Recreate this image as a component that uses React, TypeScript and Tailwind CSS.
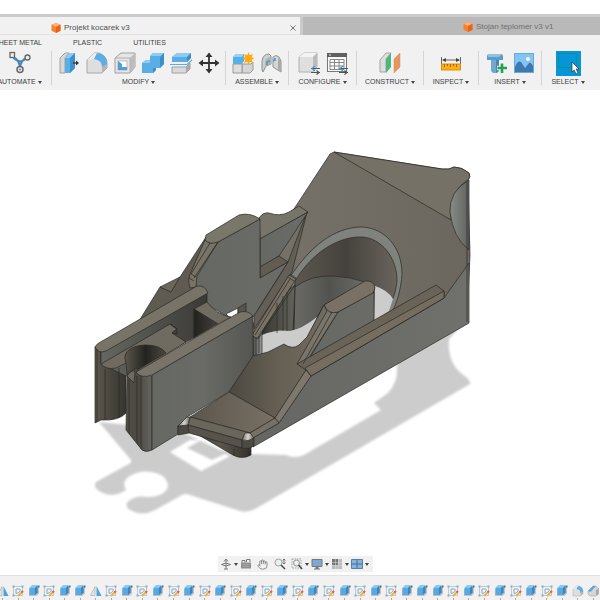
import React from 'react';
import { Hand } from 'lucide-react';

type IconProps = { className?: string };

const Svg: React.FC<{ children: React.ReactNode; className?: string }> = ({ children, className }) => (
    <svg viewBox="0 0 24 24" fill="none" aria-hidden="true" className={className || 'w-6 h-6'}>{children}</svg>
);

const CubeIcon = () => (
    <svg viewBox="0 0 10 10" aria-hidden="true" className="w-[10px] h-[10px]">
        <path d="M5 0L9.5 1.8V7.8L5 10L.5 7.8V1.8Z" fill="#f58232" />
        <path d="M5 0L9.5 1.8L5 4L.5 1.8Z" fill="#ffb47a" />
        <path d="M5 4L9.5 1.8V7.8L5 10Z" fill="#ef6210" />
    </svg>
);

const AutomateIcon = () => (
    <Svg>
        <path d="M5 6Q12 9 12 18Q12 9 19 7M5 6Q11 14 19 7" stroke="#4b86b8" strokeWidth="2" />
        <rect x="2" y="1.500" width="4.500" height="5" fill="#eee" stroke="#666" strokeWidth="1.300" />
        <circle cx="19.500" cy="6.500" r="2.500" fill="#eee" stroke="#666" strokeWidth="1.300" />
        <circle cx="12" cy="18.500" r="3" fill="#eee" stroke="#666" strokeWidth="1.500" />
        <circle cx="12" cy="18.500" r="1" fill="#4b86b8" />
    </Svg>
);

const PressPullIcon = () => (
    <Svg>
        <path d="M3 7L8 2H12L8 7V22H3Z" fill="#d8d8d8" stroke="#a0a0a0" />
        <path d="M8 7L13 2H18V17L13 22H8Z" fill="#5aaee6" />
        <path d="M8 7L13 2H18L13 7Z" fill="#8ccaf2" />
        <path d="M13 7L18 2V17L13 22Z" fill="#3c91cd" />
        <path d="M16 12H21" stroke="#333" strokeWidth="1.300" />
        <path d="M19 9.500L22 12L19 14.500Z" fill="#333" />
    </Svg>
);

const FilletIcon = ({ className }: IconProps) => (
    <Svg className={className}>
        <path d="M2 9L9 2H14Q22 5 22 12V17L17 22H2Z" fill="#dedede" stroke="#a8a8a8" />
        <path d="M2 9L9 2H14L9 8Z" fill="#ececec" />
        <path d="M17 22V14L22 12V17Z" fill="#b5b5b5" />
        <path d="M9 8L12 2Q22 3 22 13L17 16Q17 9 9 8Z" fill="#5aaee6" />
    </Svg>
);

const ShellIcon = () => (
    <Svg>
        <path d="M2 7L8 2H22V16L17 22H2Z" fill="#e5e5e5" stroke="#a0a0a0" />
        <path d="M17 7L22 2V16L17 22Z" fill="#bdbdbd" />
        <path d="M2 7H17V22" stroke="#b0b0b0" />
        <rect x="5" y="10" width="9" height="9" fill="#fff" stroke="#999" strokeWidth=".600" />
        <path d="M5 10L9 13V16H14V19H5Z" fill="#4f9fd8" />
    </Svg>
);

const CombineIcon = () => (
    <Svg>
        <path d="M1 12L5 9H9V5L12 2H23V13L19 17H15V19L12 22H1Z" fill="#5aaee6" />
        <path d="M9 5L12 2H23L20 5ZM1 12L5 9H9V12Z" fill="#8ecbf3" />
        <path d="M20 5L23 2V13L19 17V6ZM12 17H15V19L12 22Z" fill="#3e8fc9" />
    </Svg>
);

const SplitIcon = () => (
    <Svg>
        <path d="M3 6L8 2H22V7L18 11H3Z" fill="#5aaee6" />
        <path d="M3 6L8 2H22L18 6Z" fill="#8ecbf3" />
        <path d="M18 6L22 2V7L18 11Z" fill="#3e8fc9" />
        <path d="M1 13.500H18L23 9" stroke="#5aaee6" strokeWidth="1.200" />
        <path d="M3 16H17L21 12V18L17 22H3Z" fill="#d9d9d9" stroke="#a0a0a0" />
        <path d="M17 16L21 12V18L17 22Z" fill="#aaa" />
    </Svg>
);

const MoveIcon = () => (
    <Svg>
        <path d="M12 4V20M4 12H20" stroke="#333" strokeWidth="1.800" />
        <path d="M12 1.500L15.500 6H8.500ZM12 22.500L15.500 18H8.500ZM1.500 12L6 8.500V15.500ZM22.500 12L18 8.500V15.500Z" fill="#333" />
    </Svg>
);

const NewComponentIcon = () => (
    <Svg>
        <path d="M11 13H20L22 11V19L19 22H11Z" fill="#d5d5d5" stroke="#9a9a9a" />
        <path d="M2 13H11V22H2Z" fill="#dedede" stroke="#9a9a9a" />
        <path d="M2 6L5 3H13V10L11 13H2Z" fill="#5aaee6" />
        <path d="M2 6L5 3H13L11 6Z" fill="#9bd0f3" />
        <path d="M17.500 1L18.800 4.200L22 3L20.800 6L23 7.500L20.800 9L22 12L18.800 10.800L17.500 14L16.200 10.800L13 12L14.200 9L12 7.500L14.200 6L13 3L16.200 4.200Z" fill="#ffa914" />
    </Svg>
);

const JointIcon = () => (
    <Svg>
        <path d="M3 10Q4 3 10 3L12 5V13L7 15L4 21L3 19Z" fill="#cfcfcf" stroke="#8f8f8f" />
        <path d="M6 11Q7 6 12 6V13L8 14L6 18Z" fill="#b3b3b3" />
        <path d="M14 6Q17 3 20 6L22 10V21L14 16Z" fill="#d6d6d6" stroke="#8f8f8f" />
        <path d="M19 7L22 10V21L19 18Z" fill="#aaa" />
        <path d="M8 14V11L11 10M14 10L16 9V7" stroke="#3f9ad8" strokeWidth="1.600" />
    </Svg>
);

const ConfigArrows = () => (
    <g stroke="#555" strokeWidth="1.200">
        <path d="M14 17.500H23M14 21.500H23" />
        <path d="M18 15L15 17.500L18 20" stroke="#3f9ad8" />
        <path d="M19.500 19.500L22 21.500L19.500 23.500" />
    </g>
);

const ConfigureIcon = () => (
    <Svg>
        <path d="M2 6L7 2H20V16L16 21H2Z" fill="#dfdfdf" stroke="#b0b0b0" />
        <path d="M2 6L7 2H20L16 6Z" fill="#f4f4f4" />
        <path d="M16 6L20 2V16L16 21Z" fill="#bcbcbc" />
        <ConfigArrows />
    </Svg>
);

const TableIcon = () => (
    <Svg>
        <rect x="2.500" y="2.500" width="19" height="18" fill="#fafafa" stroke="#777" />
        <rect x="2" y="2" width="20" height="4" fill="#606060" />
        <path d="M5 8.500H19V18.500H5ZM5 11.500H19M5 15H19M9.500 8.500V18.500M14 8.500V18.500" stroke="#888" />
        <path d="M4 4H6" stroke="#eee" />
        <ConfigArrows />
    </Svg>
);

const ConstructIcon = () => (
    <Svg>
        <path d="M2 9L8 2H13L8 8V21H2Z" fill="#dedede" stroke="#a5a5a5" />
        <path d="M8 8L13 2V16L8 22Z" fill="#4bb779" />
        <path d="M16 8L22 2V16L16 22Z" fill="#e79663" stroke="#d98c5a" strokeWidth=".500" />
    </Svg>
);

const MeasureIcon = () => (
    <Svg>
        <path d="M2.500 6V13M21.500 6V13M4 9H20" stroke="#666" />
        <path d="M3 9L7 7V11ZM21 9L17 7V11Z" fill="#444" />
        <rect x="2.500" y="13" width="19" height="6" fill="#ffad14" stroke="#d9940f" />
        <path d="M5.500 13V16M8.500 13V15M11.500 13V16M14.500 13V15M17.500 13V16" stroke="#895d0a" strokeWidth=".800" />
    </Svg>
);

const FastenerIcon = () => (
    <Svg>
        <path d="M4 3H18L19 5V9H3V5Z" fill="#5b9bc9" />
        <path d="M4 3H18L15 6H4Z" fill="#8fc1e3" />
        <path d="M7 9H15V20L13 22H9L7 20Z" fill="#70a9cf" />
        <path d="M12 9H15V20L12 22Z" fill="#4d86b1" />
        <path d="M18 12V22M13 17H23" stroke="#f1f1f1" strokeWidth="4.500" />
        <path d="M18 12.500V22M13.500 17H23" stroke="#22a34a" strokeWidth="2.600" />
    </Svg>
);

const CanvasIcon = () => (
    <Svg>
        <rect x="2.500" y="2.500" width="19" height="19" fill="#83c4f7" stroke="#6aa9dc" />
        <circle cx="16" cy="8" r="2" fill="#fff7c8" />
        <path d="M3 16Q6 9 9 11L13 17L17 12Q19 11 21 15V21H3Z" fill="#3d79ad" />
    </Svg>
);

const SelectIcon = () => (
    <span className="flex h-[25px] w-[25px] bg-[#0695d7]">
        <svg viewBox="0 0 25 25" fill="none" aria-hidden="true" className="h-full w-full">
            <path d="M2.500 2.500H20.500V16.500H2.500Z" stroke="#128a72" strokeDasharray="2 1" />
            <path d="M16 11V21L18.200 19L20 23L22 22L20.200 18H23Z" fill="#fff" stroke="#333" strokeWidth=".700" />
        </svg>
    </span>
);

type ToolGroup = { label: string; width: string; tools: { name: string; icon: React.FC }[] };

const toolGroups: ToolGroup[] = [
    { label: 'AUTOMATE', width: 'w-[64px]', tools: [{ name: 'Automate', icon: AutomateIcon }] },
    {
        label: 'MODIFY',
        width: 'w-[174px]',
        tools: [
            { name: 'Press Pull', icon: PressPullIcon },
            { name: 'Fillet', icon: FilletIcon },
            { name: 'Shell', icon: ShellIcon },
            { name: 'Combine', icon: CombineIcon },
            { name: 'Split Body', icon: SplitIcon },
            { name: 'Move', icon: MoveIcon },
        ],
    },
    { label: 'ASSEMBLE', width: 'w-[63px]', tools: [{ name: 'New Component', icon: NewComponentIcon }, { name: 'Joint', icon: JointIcon }] },
    { label: 'CONFIGURE', width: 'w-[68px]', tools: [{ name: 'Configure', icon: ConfigureIcon }, { name: 'Table', icon: TableIcon }] },
    { label: 'CONSTRUCT', width: 'w-[67px]', tools: [{ name: 'Offset Plane', icon: ConstructIcon }] },
    { label: 'INSPECT', width: 'w-[55px]', tools: [{ name: 'Measure', icon: MeasureIcon }] },
    { label: 'INSERT', width: 'w-[63px]', tools: [{ name: 'Insert Fastener', icon: FastenerIcon }, { name: 'Canvas', icon: CanvasIcon }] },
    { label: 'SELECT', width: 'w-[52px]', tools: [{ name: 'Select', icon: SelectIcon }] },
];

const Caret = () => (
    <svg viewBox="0 0 4 3" aria-hidden="true" className="h-[3px] w-1 shrink-0"><path d="M0 0H4L2 3Z" fill="#444" /></svg>
);

const TabBar = () => (
    <div className="flex h-[21px] shrink-0 border-t-[3px] border-[#cbcbcb] bg-[#cbcbcb] text-[8px] leading-[10px]">
        <div className="flex w-1/2 items-center border-b border-[#e4e4e4] bg-[#f1f1f1] pr-px pt-1">
            <button className="flex flex-1 items-center gap-[3px] pl-[51px] text-[#505050]"><CubeIcon />Projekt kocarek v3</button>
            <button aria-label="Close tab" className="p-[3px]">
                <svg viewBox="0 0 6 6" className="h-[6px] w-[6px]"><path d="M.5.5L5.500 5.500M5.500.5L.5 5.500" stroke="#777" /></svg>
            </button>
        </div>
        <button className="ml-[3px] flex flex-1 items-center gap-[3px] bg-[#b9b9b9] pl-40 pt-0.5 whitespace-nowrap text-[#707070]">
            <CubeIcon />Stojan teplomer v3 v1
        </button>
    </div>
);

const Toolbar = () => (
    <div className="h-[55px] shrink-0 overflow-hidden bg-[#f1f1f1] text-[7px] leading-[8px] text-[#404040]">
        <nav className="-ml-1.5 flex gap-[31px] pt-1">
            <button className="whitespace-nowrap">SHEET METAL</button>
            <button>PLASTIC</button>
            <button>UTILITIES</button>
        </nav>
        <div className="-ml-3 flex pt-1">
            {toolGroups.map(({ label, width, tools }) => (
                <div key={label} className={`${width} flex h-[34px] shrink-0 flex-col items-center border-r border-[#d5d5d5] last:border-r-0`}>
                    <div className="flex h-6 items-center">
                        {tools.map(({ name, icon: Icon }) => (
                            <button key={name} aria-label={name} className="flex w-7 items-center justify-center"><Icon /></button>
                        ))}
                    </div>
                    <button className="flex items-center gap-0.5 pt-[3px]">{label}<Caret /></button>
                </div>
            ))}
        </div>
    </div>
);

// Faces are listed back to front
const faces: [string, string][] = [
    // rear block
    ['M292 212L330 154L334 152L442 169Q450 170 454 167Q462 167 469 173Q471 177 468 180L470 255L468 298L392 345L280 360L250 334Z', 'url(#brown)'],
    ['M334 152L442 169Q450 170 454 167Q462 167 469 173Q471 177 468 180Q448 192 451 220Z', '#757166'],
    ['M469 180Q449 191 450 212Q453 238 469 250Z', 'url(#cove)'],
    // arch
    ['M290 277C310 247 334 227 362 227C384 228 402 246 402 274C401 289 397 303 392 312L375 324L294 331Z', '#80837d'],
    ['M295 281C313 251 340 236 362 237C381 238 397 257 397 281C396 290 394 297 392 300L374 324L294 331Z', 'url(#bore)'],
    ['M295 287Q311 275 333 276Q351 277 365 282L324 305L314 323L294 332Z', 'url(#floorFace)'],
    ['M375 286Q388 290 393 299L389 311L374 323Z', '#cccccc'],
    ['M277 300L295 285L293 331L259 340Z', 'url(#column)'],
    ['M262 335Q276 329 290 331Q302 329 317 317L312 342L278 358H258Z', '#cccccc'],
    ['M253 334L262 329V355L253 357Z', 'url(#steel)'],
    // fins behind the plate
    ['M288 262L307 212L300 240L292 272L254 329V316Z', '#645f56'],
    ['M259 218Q263 212 269 213Q280 217 289 212L299 206L308 212L260 239Z', '#77746a'],
    ['M260 239L308 212L279 256L260 267Z', 'url(#plate)'],
    ['M260 267L279 256L288 262L260 278Z', '#625c52'],
    ['M289 275L296 279L257 339L252 335Z', '#777166'],
    // plate
    ['M206 237L180 277L171 292L160 287L139 321L190 294L202 292L212 246Z', '#5f5b52'],
    ['M180 277L160 287L171 292Z', '#6b675d'],
    ['M218 242L260 219V278L288 262L253 317L246 315L231 319L205 303L197 292L194 276Z', 'url(#plate)'],
    ['M205 240L210 243L218 242L197 276L196 287L190 288Q187 279 191 272Z', '#777367'],
    ['M206 235L239 215Q250 212 260 219L218 242Q209 245 205 240Z', '#79766a'],
    ['M226 314L238 308V316L230 318Z', '#ffffff'],
    ['M238 308L246 303V315L238 316Z', '#555550'],
    // left wall
    ['M95 347L101 352V363Q107 369 116 368L126 363V413Q119 421 101 420L95 423Z', 'url(#front)'],
    ['M101 352L207 292V302L194 309V338L186 342L126 376L101 364Z', 'url(#inner)'],
    ['M95 347Q96 344 104 340L197 286Q205 285 208 293L106 351Q98 354 95 347Z', '#777366'],
    ['M194 309L207 302Q217 315 231 317L218 324Z', '#716c61'],
    ['M194 309L218 324L194 338Z', 'url(#pocket)'],
    ['M101 364L170 324L177 329L172 333L186 342L136 373L126 363L116 368Q106 370 101 364Z', '#706b61'],
    ['M170 324L177 329V334L172 333L177 329Z', '#443f39'],
    ['M126 363C121 350 135 345 146 345Q160 345 166 353L132 373L127 374Z', 'url(#hole)'],
    // right wall
    ['M127 376L129 373L136 368L139 370L138 373L152 376V450Q146 453 142 450L126 430Z', 'url(#frontRight)'],
    ['M152 375L253 316V356L229 392L187 417L178 426V434L152 450Z', 'url(#sideWall)'],
    ['M136 372L240 312Q248 310 253 316L152 375Q141 379 136 372Z', '#78746a'],
    ['M127 376L129 373L134 370L135 373L134 383Z', '#6d695f'],
    // central post
    ['M338 312L374 292V324L306 364Z', 'url(#plate)'],
    ['M324 305L330 312L338 312L305 364L297 364L283 359L306 340Z', '#79756a'],
    ['M324 305L365 281Q374 280 375 288L373 293L338 312Q328 315 324 305Z', '#797166'],
    // side and rail
    ['M311 376L444 298L469 263V323L253 447V438L279 423Z', 'url(#side)'],
    ['M297 364L436 285L444 291V298L311 376L305 370Z', '#6a6458'],
    ['M305 368L444 291V298L311 376Z', '#746d60'],
    // basin
    ['M253 356L268 352L284 344Q292 350 299 345L307 337L324 305L327 311L297 364L306 370L275 418L229 392Z', 'url(#basin)'],
    ['M229 392L275 418L250 433L190 417Z', 'url(#lip)'],
    ['M306 370L311 376L279 423L275 418Z', '#7d786b'],
    ['M275 418L279 423L253 438L250 433Z', '#777064'],
    ['M190 417L250 433L242 440L188 425Z', '#6b665c'],
    ['M197 434L233 455Q242 460 251 455V446L189 431Z', 'url(#foot)'],
    ['M188 425L242 440V448L189 433Z', '#56534c'],
    ['M178 426L188 425L189 433L178 435Z', '#4b4942'],
    ['M187 417L190 417L188 425L178 426Z', 'url(#glint)'],
    ['M242 440Q248 442 254 438V446Q248 450 242 448Z', '#4d4a44'],
    ['M245 433H250L254 438Q248 442 242 440Z', 'url(#glint)'],
];

const creases = [
    'M97 349V422M105 369V419M119 368V418M129 379V433M137 376V443M141 376V449',
    'M277 303V333M283 296V331M287 292V331M256 337V355M259 336V353',
    'M218 242L194 278M210 243L191 274M191 274L196 277M189 278L194 281',
    'M332 312L303 364M467 182V322',
    'M290 274L296 278M288 277L294 281M290 279L255 335M295 285L258 339M234 449V456M249 449V456',
];

const gradients: [string, string, string, string?][] = [
    ['brown', '#77736b', '#6c675e'],
    ['cove', '#898b86', '#60625f'],
    ['bore', '#5c5850', '#45423d', '#69645c'],
    ['floorFace', '#6a6b67', '#52534f', '#6b6c68'],
    ['column', '#32312e', '#65645c'],
    ['steel', '#4f5150', '#9b9d9a'],
    ['plate', '#666863', '#6b6c68'],
    ['front', '#5c584e', '#494640', '#37352f'],
    ['inner', '#666761', '#3a3936'],
    ['pocket', '#23221f', '#44413b'],
    ['hole', '#5a564d', '#24231f', '#4b4841'],
    ['frontRight', '#504d45', '#4c4942', '#666761'],
    ['sideWall', '#666863', '#6a6b67', '#555651'],
    ['side', '#666762', '#70716c'],
    ['basin', '#4c4841', '#655f54', '#716b60'],
    ['lip', '#5b554c', '#787165'],
    ['foot', '#3a3833', '#5b574e', '#33312d'],
    ['glint', '#6d6a62', '#d8d6ce', '#68655c'],
];

const Model = () => (
    <svg viewBox="0 90 600 485" role="img" aria-label="3D model" className="block w-full">
        <defs>
            {gradients.map(([id, from, mid, to]) => (
                <linearGradient key={id} id={id}>
                    <stop offset="0" stopColor={from} />
                    {to && <stop offset=".5" stopColor={mid} />}
                    <stop offset="1" stopColor={to || mid} />
                </linearGradient>
            ))}
            <filter id="soft"><feGaussianBlur stdDeviation="1" /></filter>
        </defs>
        <g filter="url(#soft)">
            <path
                d="M99 422L131 460Q132 463 127 465L96 482Q92 488 103 493Q114 498 126 490Q121 481 130 476Q139 470 152 472Q168 475 168 487Q164 497 147 497Q137 495 130 500Q123 505 130 510Q142 517 155 510L182 495Q186 493 190 495L240 511Q247 513 255 509L470 384Q471 380 462 374Q447 362 449 339L462 325L400 350L397 368Q398 382 388 393L374 403L381 410L304 455Q295 459 286 455L252 454L220 450L178 430Z"
                fill="#cccccc"
            />
            <path d="M170 452L190 440L201 440L187 448L212 460L225 454L230 456L201 471Z" fill="#fff" />
        </g>
        <g stroke="#292824" strokeWidth=".7" strokeLinejoin="round">
            {faces.map(([d, fill]) => (
                <path key={d} d={d} fill={fill} stroke={fill === '#cccccc' ? 'none' : undefined} />
            ))}
            {creases.map((d) => <path key={d} d={d} fill="none" />)}
        </g>
    </svg>
);

const OrbitIcon = () => (
    <Svg className="h-3 w-3"><path d="M12 2V22M12 2L8 7M12 2L16 7M3 13Q12 7 21 13Q12 19 3 13M8 22H16" stroke="#777" strokeWidth="2" /></Svg>
);
const LookAtIcon = () => (
    <Svg className="h-3 w-3"><path d="M2 9H22V21H2Z" fill="#8f8f8f" /><path d="M4 9V5H10V9M13 8V3H20V8" stroke="#777" strokeWidth="2" /><path d="M5 13H19M5 17H19" stroke="#bbb" /></Svg>
);
const PanIcon = () => <Hand className="h-[11px] w-[11px]" color="#777" strokeWidth={1.7} />;
const ZoomIcon = () => (
    <Svg className="h-3 w-3"><circle cx="9" cy="9" r="7" fill="#e8f0f2" stroke="#888" strokeWidth="1.500" /><path d="M14 14L22 22" stroke="#444" strokeWidth="3" /><path d="M20 2V12M17 5L20 2L23 5M17 9L20 12L23 9" stroke="#555" strokeWidth="1.500" /></Svg>
);
const FitIcon = () => (
    <Svg className="h-3 w-3"><path d="M2 2H20V20H2Z" stroke="#888" strokeWidth="1.500" strokeDasharray="3 2" /><circle cx="11" cy="10" r="6" fill="#e8f0f2" stroke="#777" strokeWidth="1.500" /><path d="M15 14L22 22" stroke="#444" strokeWidth="3" /></Svg>
);
const DisplayIcon = () => (
    <Svg className="h-3 w-3"><path d="M2 3H22V17H2Z" fill="#7fa9d3" stroke="#777" strokeWidth="2" /><path d="M9 18H15V21H18V23H6V21H9Z" fill="#777" /></Svg>
);
const GridIcon = () => (
    <Svg className="h-3 w-3"><path d="M2 2H22V22H2Z" fill="#bbb" /><path d="M2 2H14V14H2Z" fill="#777" /><path d="M2 9H22M2 15H22M9 2V22M15 2V22" stroke="#ddd" /></Svg>
);
const ViewportIcon = () => (
    <Svg className="h-3 w-3"><path d="M1 3H23V21H1Z" fill="#86b2df" stroke="#5f7fa2" strokeWidth="2" /><path d="M12 3V21M1 12H23" stroke="#486c95" strokeWidth="2" /></Svg>
);

const viewTools = [
    { name: 'Orbit', icon: OrbitIcon, menu: true },
    { name: 'Look At', icon: LookAtIcon },
    { name: 'Pan', icon: PanIcon },
    { name: 'Zoom', icon: ZoomIcon },
    { name: 'Fit', icon: FitIcon, menu: true },
    { name: 'Display Settings', icon: DisplayIcon, menu: true },
    { name: 'Grid and Snaps', icon: GridIcon, menu: true },
    { name: 'Viewports', icon: ViewportIcon, menu: true },
];

const ViewBar = () => (
    <div className="absolute bottom-[3px] left-1/2 flex h-4 -translate-x-[82px] items-center bg-[#f1f1f1] px-0.5">
        {viewTools.map(({ name, icon: Icon, menu }) => (
            <button key={name} aria-label={name} className={`flex items-center gap-0.5 ${menu ? 'w-5' : 'w-[17px]'}`}>
                <Icon />{menu && <Caret />}
            </button>
        ))}
    </div>
);

const SketchFeature = () => (
    <Svg className="h-3 w-3">
        <path d="M3 3H21V21H3Z" stroke="#a9bccb" strokeWidth="1.500" />
        <path d="M8 8H16Q18 15 8 17Z" stroke="#5d99c5" strokeWidth="1.500" />
        <path d="M1 1H5V5H1ZM19 1H23V5H19ZM1 19H5V23H1Z" fill="#8fa9bc" />
        <path d="M12 22L20 14" stroke="#f5b13b" strokeWidth="4" />
        <path d="M19 15L22 12" stroke="#e35b45" strokeWidth="4" />
    </Svg>
);
const ExtrudeFeature = () => (
    <Svg className="h-3 w-3">
        <path d="M2 8L8 3H22V17L17 22H2Z" fill="#c2c2c2" />
        <path d="M3 6L8 1H19V15L14 20H3Z" fill="#55aae3" />
        <path d="M3 6L8 1H19L14 6Z" fill="#86c6ef" />
        <path d="M14 6L19 1V15L14 20Z" fill="#3b85bb" />
        <path d="M20 1H23V5H20Z" fill="#666" />
    </Svg>
);
const MirrorFeature = () => (
    <Svg className="h-3 w-3">
        <path d="M10 3V21H1Z" fill="#e5e5e5" stroke="#999" />
        <path d="M13 2L23 22H13Z" fill="#4da3dc" />
    </Svg>
);
const FilletFeature = () => <FilletIcon className="h-3 w-3" />;
const ChamferFeature = () => (
    <Svg className="h-3 w-3">
        <path d="M2 12L12 2H18L23 7V18L18 22H6L2 18Z" fill="#d6d6d6" stroke="#999" />
        <path d="M2 12L12 2H18L7 14Z" fill="#55aae3" />
        <path d="M18 10L23 7V18L18 22Z" fill="#aaa" />
    </Svg>
);

const featureIcons: Record<string, { name: string; icon: React.FC }> = {
    M: { name: 'Mirror', icon: MirrorFeature },
    S: { name: 'Sketch', icon: SketchFeature },
    E: { name: 'Extrude', icon: ExtrudeFeature },
    F: { name: 'Fillet', icon: FilletFeature },
    C: { name: 'Chamfer', icon: ChamferFeature },
};

const history = 'MSESEEMSESESESESESESESESESEEESESESESEFC'.split('');

const Timeline = () => (
    <div className="h-[25px] shrink-0 overflow-hidden border-t border-[#e2e2e2] bg-[#f1f1f1] pt-[9px]">
        <div className="-ml-1 flex justify-between">
            {history.map((type, i) => {
                const { name, icon: Icon } = featureIcons[type];
                return (
                    <button key={i} aria-label={`${name} ${i + 1}`} className="flex w-[13px] shrink-0 flex-col items-center gap-px">
                        <Icon />
                        <span className="h-1 w-px bg-[#aaa]" />
                    </button>
                );
            })}
        </div>
    </div>
);

const App: React.FC = () => (
    <div className="flex min-h-screen flex-col overflow-hidden bg-white pt-3.5 font-['Liberation_Sans',Arial,sans-serif]">
        <TabBar />
        <Toolbar />
        <main className="relative flex-1">
            <Model />
            <ViewBar />
        </main>
        <Timeline />
    </div>
);

export default App;
